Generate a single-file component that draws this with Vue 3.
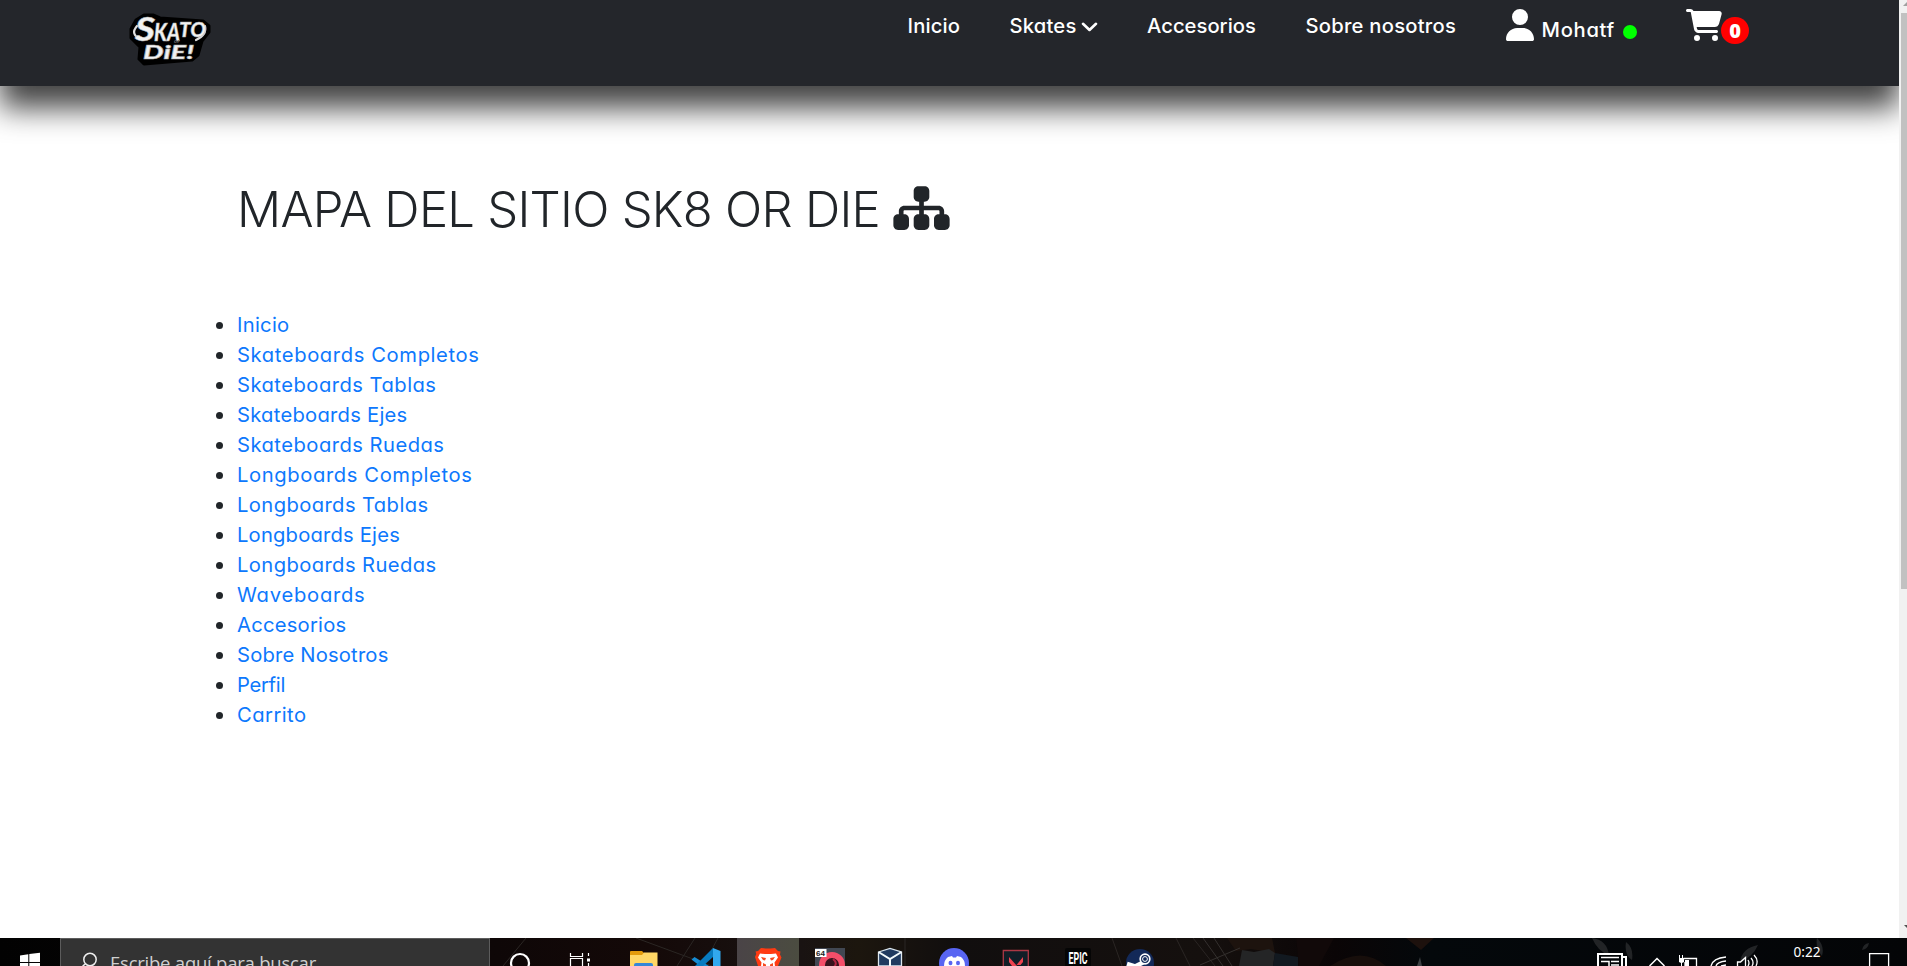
<script setup>
const links = [
  ['Inicio', 52.5],
  ['Skateboards Completos', 242.5],
  ['Skateboards Tablas', 199.5],
  ['Skateboards Ejes', 170.5],
  ['Skateboards Ruedas', 207.5],
  ['Longboards Completos', 235.5],
  ['Longboards Tablas', 191.5],
  ['Longboards Ejes', 163],
  ['Longboards Ruedas', 199.5],
  ['Waveboards', 128.5],
  ['Accesorios', 109.5],
  ['Sobre Nosotros', 151.5],
  ['Perfil', 48],
  ['Carrito', 69.5]
]

// Tracks a line of text so that it fills the given width.
const vFit = {
  mounted(el, { value }) {
    const natural = el.getBoundingClientRect().width
    const n = el.textContent.length
    el.style.letterSpacing = (value - natural) / n + 'px'
  }
}
</script>

<template>
  <div class="screen">
    <div class="browser">
      <div class="page">
        <header class="header">
          <svg class="logo" width="84" height="58" viewBox="0 0 84 58">
            <path d="M3 20 8 11 16 6h9l7 3 43 3 6 5v6l-7 9-4 14-6 5-48 4-5-5 1-12-9-9z" fill="#000" stroke="#000" stroke-width="3" stroke-linejoin="round" />
            <path d="M9 17q-7 8 3 13M77 17q2 9-9 14" fill="none" stroke="#ddd" stroke-width="2.200" stroke-linecap="round" />
            <g font-family="Lato, sans-serif" font-weight="900" font-style="italic" fill="#f2f2f2" stroke="#aaa" stroke-width=".5">
              <text x="7" y="32" font-size="33" textLength="20" lengthAdjust="spacingAndGlyphs">S</text>
              <text x="26" y="32" font-size="25" textLength="26" lengthAdjust="spacingAndGlyphs">KA</text>
              <text x="51" y="28" font-size="21" textLength="27" lengthAdjust="spacingAndGlyphs">TO</text>
              <text x="15" y="50" font-size="18" textLength="51" lengthAdjust="spacingAndGlyphs">DiE!</text>
              <text x="46" y="34" font-size="6" fill="#666" stroke="none">or</text>
            </g>
          </svg>
          <nav class="nav">
            <a class="item"><span v-fit="52.5">Inicio</span></a>
            <a class="item skates"><span v-fit="67">Skates</span>
              <svg width="17" height="10" viewBox="0 0 17 10"><path d="M2 1.800 8.500 8 15 1.800" fill="none" stroke="#fff" stroke-width="2.600" stroke-linecap="round" stroke-linejoin="round" /></svg>
            </a>
            <a class="item"><span v-fit="109">Accesorios</span></a>
            <a class="item"><span v-fit="150.5">Sobre nosotros</span></a>
            <a class="item user">
              <svg width="28" height="32" viewBox="0 0 448 512"><path fill="#fff" d="M224 256a128 128 0 1 0 0-256 128 128 0 1 0 0 256zm-45.700 48C79.800 304 0 383.800 0 482.300 0 498.700 13.300 512 29.700 512h388.600c16.400 0 29.700-13.300 29.700-29.700 0-98.500-79.800-178.300-178.300-178.300z" /></svg>
              <span v-fit="73.5">Mohatf</span><i class="dot"></i>
            </a>
            <a class="item cart">
              <svg width="36" height="32" viewBox="0 0 576 512"><path fill="#fff" d="M0 24C0 10.700 10.700 0 24 0h45.500c22 0 41.500 12.800 50.600 32h411c26.300 0 45.500 25 38.600 50.400l-41 152.300c-8.500 31.400-37 53.300-69.500 53.300H170.700l5.400 28.500c2.200 11.300 12.100 19.500 23.600 19.500H488c13.300 0 24 10.700 24 24s-10.700 24-24 24H199.700c-34.600 0-64.300-24.600-70.700-58.500L77.400 54.500c-.7-3.800-4-6.500-7.900-6.500H24C10.700 48 0 37.300 0 24zM128 464a48 48 0 1 1 96 0 48 48 0 1 1-96 0zm336-48a48 48 0 1 1 0 96 48 48 0 1 1 0-96z" /></svg>
              <b class="badge">0</b>
            </a>
          </nav>
        </header>
        <main class="main">
          <h1 class="title"><span v-fit="643">MAPA DEL SITIO SK8 OR DIE</span>
            <svg width="57" height="50" viewBox="0 0 576 512"><path fill="#212529" d="M208 80c0-26.500 21.500-48 48-48h64c26.500 0 48 21.500 48 48v64c0 26.500-21.500 48-48 48h-8v40h152c30.900 0 56 25.100 56 56v32h8c26.500 0 48 21.500 48 48v64c0 26.500-21.500 48-48 48h-64c-26.500 0-48-21.500-48-48v-64c0-26.500 21.500-48 48-48h8v-32c0-4.400-3.600-8-8-8H312v40h8c26.500 0 48 21.500 48 48v64c0 26.500-21.500 48-48 48h-64c-26.500 0-48-21.500-48-48v-64c0-26.500 21.500-48 48-48h8v-40H112c-4.400 0-8 3.600-8 8v32h8c26.500 0 48 21.500 48 48v64c0 26.500-21.500 48-48 48H48c-26.500 0-48-21.500-48-48v-64c0-26.500 21.500-48 48-48h8v-32c0-30.900 25.100-56 56-56h152v-40h-8c-26.500 0-48-21.500-48-48z" /></svg>
          </h1>
          <ul class="map">
            <li v-for="[name, w] in links" :key="name"><a v-fit="w">{{ name }}</a></li>
          </ul>
        </main>
      </div>
      <div class="scrollbar">
        <svg width="8" height="12" viewBox="0 0 8 12"><path d="M4 6 8 2v4z" fill="#a0a0a0" /></svg>
        <div class="thumb"></div>
        <svg class="down" width="8" height="14" viewBox="0 0 8 14"><path d="M5 1h3v3z" fill="#505050" /></svg>
      </div>
    </div>

    <footer class="taskbar">
      <svg class="wall" width="1907" height="28" viewBox="0 0 1907 28">
        <defs>
          <linearGradient id="wallpaper">
            <stop offset="0" stop-color="#020202" /><stop offset=".26" stop-color="#0e0707" />
            <stop offset=".34" stop-color="#140908" /><stop offset=".42" stop-color="#191312" />
            <stop offset=".45" stop-color="#1c160e" /><stop offset=".5" stop-color="#110e0e" />
            <stop offset=".63" stop-color="#15100e" /><stop offset=".7" stop-color="#0a0506" />
            <stop offset=".75" stop-color="#04080b" /><stop offset="1" stop-color="#040507" />
          </linearGradient>
        </defs>
        <path fill="url(#wallpaper)" d="M0 0h1907v28H0z" />
        <path d="M526 0 503 28M636 0l76 28M695 0l-18 28M718 0l-15 28M905 0v28M1112 0l10 28M1176 0l14 28M1193 0l22 28" stroke="#2b2624" fill="none" />
        <path fill="#1d130e" d="M1227 0h45l3 15-24-4-15 2z" />
        <path fill="#242526" d="m1242 12 12 2 15-3 6 4-2 13h-34z" />
        <path fill="#121920" d="m1275 15 23 4v9h-25z" />
        <path d="m1203 0 20 28m-9-28 18 28m-32-1 40-17" stroke="#34302e" fill="none" />
        <path fill="#110909" d="M1296 0h38l-15 28h-20z" />
        <path fill="#170e0b" d="M1330 28q32-21 56 0z" />
        <path fill="#1d110d" d="M1406 0h28l-13 12z" />
        <path fill="#3c3f42" d="m1420 19 2 9h-5z" />
        <path fill="#222426" d="M1592 0q15 2 17 17-11-3-17-17zM1626 4q8 6 6 18-8-5-6-18zM1758 7q-16 3-18 17 13-5 18-17zM1817 0q8 8 5 18-7-8-5-18zM1869 5q-6 1-7 7 6-1 7-7z" />
      </svg>
      <div class="start">
        <svg width="60" height="28" viewBox="0 0 60 28"><path fill="#fff" d="M20 17.500 28.300 16.300V24H20zM29.300 16.100 40 14.700V24H29.300zM20 25h8.300v3H20zM29.300 25H40v3H29.300z" /></svg>
      </div>
      <div class="search">
        <svg width="20" height="28" viewBox="0 0 20 28"><circle cx="9" cy="21.500" r="6.200" fill="none" stroke="#eee" stroke-width="1.500" /><path d="m4 26-4 4" stroke="#eee" stroke-width="1.500" /></svg>
        <span v-fit="206">Escribe aquí para buscar</span>
      </div>
      <div class="apps">
        <svg viewBox="0 0 62 28"><circle cx="31" cy="25" r="9" fill="none" stroke="#fff" stroke-width="2.200" /></svg>
        <svg viewBox="0 0 62 28"><path d="M19.500 15v3.500h12V15M19.500 28v-7.500h12V28M37.500 15v3M37.500 25v3" fill="none" stroke="#fff" stroke-width="1.200" /><path fill="#fff" d="M36 20.500h3v3h-3z" /></svg>
        <svg viewBox="0 0 62 28"><path fill="#e39b0b" d="M17 14q0-1 1-1h11l2 2v4H17z" /><path fill="#ffd766" d="M17 17h12l2-2.500h13.500V28H17z" /><path fill="#3486d8" d="M21 28v-1q0-2 2-2h15q2 0 2 2v1z" /></svg>
        <svg viewBox="0 0 62 28"><path fill="#168bd2" d="m16.500 21.500 3-2.500L34 28h-9z" /><path fill="#087bc0" d="m20 28 18-18v9l-10 9z" /><path fill="#32a9ef" d="m38 10 7.500 3v15H38z" /></svg>
        <svg viewBox="0 0 62 28" class="active"><path fill="#ff3b12" d="m24 10 4.500.5h5L38 10l3 3 2.500.5-.5 3 1.500 3L41 28H21l-3-9 1.300-3-.8-2.500L21 13z" /><path fill="#fff" d="m23 15.500 5 .5h6l5-.5 2 4-3.500 5 .5 3.500H24l.5-3.500-3.500-5z" /><path fill="#f64a20" d="m24 19 5 1-1 2.500-2-.5zM38 19l-5 1 1 2.500 2-.5zM26 25l3 1.500V28h-3zM36 25l-3 1.500V28h3z" /></svg>
        <svg viewBox="0 0 62 28"><path fill="#414752" d="M16 10h30v18H16z" /><circle cx="33" cy="27" r="10" fill="#37131d" stroke="#f44e69" stroke-width="6" /><path d="M34 21q5 4 1 8" stroke="#b22542" stroke-width="2" fill="none" /><path fill="#fff" d="M16 11h11.500v8H16z" /><text x="17" y="17.800" font-family="Liberation Sans, sans-serif" font-size="8" font-weight="700" fill="#222" textLength="9">64</text></svg>
        <svg viewBox="0 0 62 28"><path d="m17.500 14 11.500-3.500L40.500 14v14h-23z" fill="#203a60" stroke="#dce7ef" stroke-width="1.300" /><path d="m17.500 14 11.500 7 11.500-7M29 21v7" fill="none" stroke="#f4fafc" stroke-width="2" /></svg>
        <svg viewBox="0 0 62 28"><circle cx="31" cy="25" r="15" fill="#5865f2" /><path fill="#fff" d="M21 28q0-6 4-9l4-1 1 1.500h3l1-1.500 4 1q4 3 4 9z" /><ellipse cx="27.500" cy="25" rx="2" ry="2.200" fill="#5865f2" /><ellipse cx="35" cy="25" rx="2" ry="2.200" fill="#5865f2" /></svg>
        <svg viewBox="0 0 62 28"><path fill="#111e27" stroke="#ac3845" stroke-width="1.300" d="M18.300 12.500h25V30h-25z" /><path fill="#ee4350" d="m24 19 8 9h-5l-3-4zM38 19v5l-2.500 3h-4z" /></svg>
        <svg viewBox="0 0 62 28"><rect x="18" y="10" width="26" height="22" rx="2" fill="#050505" /><text x="21.500" y="25.500" font-family="Roboto, sans-serif" font-size="16.500" font-weight="700" fill="#fff" textLength="19" lengthAdjust="spacingAndGlyphs">EPIC</text></svg>
        <svg viewBox="0 0 62 28"><circle cx="31" cy="25" r="14" fill="#132958" /><path d="m18 26 8 2.500 8-4" stroke="#fff" stroke-width="4.500" fill="none" /><circle cx="36" cy="21" r="4.800" fill="#132958" stroke="#fff" stroke-width="1.700" /><circle cx="36" cy="21" r="2.400" fill="none" stroke="#fff" /></svg>
      </div>
      <svg class="tray" width="310" height="28" viewBox="0 0 310 28" fill="none" stroke="#fff">
        <path stroke-width="2" d="M1 28V16h24v12M25 19h4v9" /><path stroke-width="1.500" d="M4 19.500h18M4 23.500h8V28M14 23.500h8M14 27h8" />
        <path stroke-width="1.500" d="m52.500 28 7.500-7.500L67.500 28" />
        <path d="M86.500 20.500h13V28M88 28v-4" stroke-width="1.300" /><path fill="#fff" stroke="none" d="M82 17h1v3h2v-3h1v3h1v4l-2 1v3h-1v-3l-2-1v-4zM88 22h4v6h-4z" />
        <path stroke-width="1.400" d="M114 28q2-8 15-9M119 28q1-4 10-5M124 28l5-1" />
        <path stroke-width="1.300" d="M140.500 28v-4h3l5-4.500V28M151 22q2 3 0 6M154 20q3.500 4 1 8M157 17q5 5 2 11" />
        <text x="196.500" y="19" font-family="Noto Sans, sans-serif" font-size="15.300" fill="#fff" stroke="none" textLength="27" lengthAdjust="spacingAndGlyphs">0:22</text>
        <path stroke-width="1.300" d="M272.600 28V15.600h19V28" />
      </svg>
    </footer>
  </div>
</template>

<style>
body { margin: 0; overflow: hidden; }
</style>

<style scoped>
.screen { width: 1907px; height: 966px; overflow: hidden; display: flex; flex-direction: column; background: #fff; font-family: Inter, "Open Sans", sans-serif; font-feature-settings: "cv11"; color: #212529; }
.browser { height: 938px; flex: none; display: flex; }
.page { width: 1899px; overflow: hidden; }
.header { height: 86px; display: flex; background: #24262b; box-shadow: 0 22px 30px rgba(0, 0, 0, .74); }
.logo { margin: 9px 0 0 128px; flex: none; }
.nav { margin-left: 695.500px; display: flex; gap: 49.5px; color: #fff; font-size: 20.200px; font-weight: 500; }
.item { height: 52px; line-height: 52px; display: flex; white-space: nowrap; }
.item svg { flex: none; }
.skates { width: 88px; }
.skates svg { margin: 22px 0 0 4px; }
.user, .cart { line-height: 60px; }
.user { width: 131px; }
.user svg, .cart svg { margin-top: 9px; }
.user span { margin-left: 8px; }
.dot { width: 14px; height: 14px; margin: 25px 0 0 8px; flex: none; border-radius: 50%; background: #0f0; }
.badge { width: 28px; height: 27px; margin: 17px 0 0 -1px; border-radius: 14px; background: #f00; font: 800 20px/27px "Open Sans", sans-serif; text-align: center; }
.main { padding: 86px 0 0 237px; }
.title { margin: 0; height: 75px; display: flex; font-size: 49px; line-height: 75px; font-weight: 350; white-space: nowrap; }
.title svg { margin: 11px 0 0 13px; }
.map { margin: 63px 0 0; padding: 0; list-style: none; font-size: 20.200px; font-weight: 400; }
.map li { height: 30px; line-height: 30px; display: flex; align-items: center; margin-left: -21px; white-space: nowrap; }
.map li::before { content: ""; width: 7px; height: 7px; margin-right: 14px; border-radius: 50%; background: #212529; }
.map a { color: #0d78fd; }
.scrollbar { width: 8px; height: 938px; background: #f1f1f1; display: flex; flex-direction: column; }
.scrollbar svg { flex: none; }
.thumb { margin: 1px 0 0 2px; height: 576px; background: #c1c1c1; }
.down { margin-top: auto; }
.taskbar { position: relative; height: 28px; display: flex; overflow: hidden; }
.wall { position: absolute; left: 0; top: 0; }
.start, .search, .apps, .tray { position: relative; flex: none; }
.start { width: 60px; }
.search { box-sizing: border-box; width: 430px; height: 28px; border: 1px solid #5c5c5c; border-bottom: 0; background: #333; display: flex; font: 18.500px/26px "Open Sans", sans-serif; color: #d0d0d0; white-space: nowrap; }
.search svg { margin: -1px 9px 0 20px; flex: none; }
.search span { margin-top: 11px; }
.apps { display: flex; margin-left: -1px; }
.apps svg { width: 62px; height: 28px; }
.apps .active { background: linear-gradient(90deg, #4a4447, #4b4c40); }
.tray { margin-left: auto; }
</style>
